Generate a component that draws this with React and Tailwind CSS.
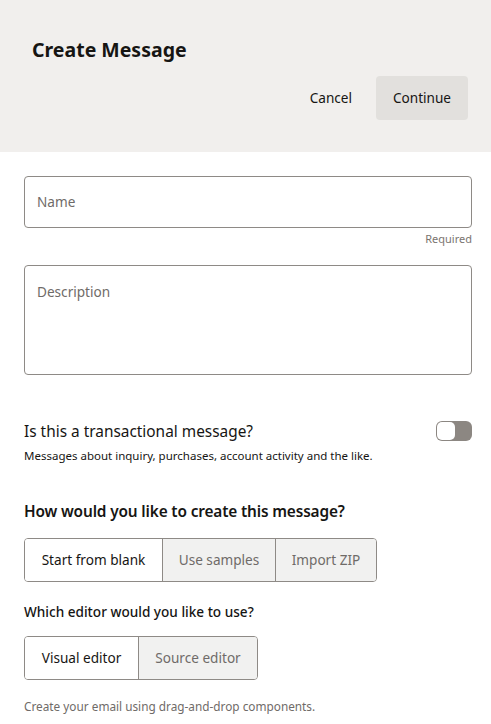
import React from "react";

const font = { fontFamily: '"Noto Sans", "Open Sans", sans-serif' };

const Segmented = ({ items, className = "" }) => (
  <div className={`flex border border-[#8e8a86] rounded-[4px] overflow-hidden w-fit ${className}`}>
    {items.map((it, i) => (
      <div
        key={it.label}
        className={`h-[42px] flex items-center justify-center text-[13.6px] ${it.w} ${
          i > 0 ? "border-l border-[#8e8a86]" : ""
        } ${it.active ? "bg-white text-[#161513]" : "bg-[#f1f1f0] text-[#6f6b68]"}`}
      >
        {it.label}
      </div>
    ))}
  </div>
);

export default function App() {
  return (
    <div className="w-[491px] min-h-[724px] bg-white" style={font}>
      {/* header */}
      <div className="bg-[#f1efed] h-[152px] px-[32px] pt-[36px]">
        <h1 className="text-[19.5px] font-bold text-[#161513] leading-[28px]">Create Message</h1>
        <div className="flex justify-end items-center gap-[12px] mt-[12px] -mr-[9px]">
          <button className="h-[44px] px-[12px] text-[13.6px] text-[#161513] pt-[1px]">Cancel</button>
          <button className="h-[44px] w-[92px] rounded-[4px] bg-[#e2e0dd] text-[13.6px] text-[#161513] pt-[1px]">
            Continue
          </button>
        </div>
      </div>

      {/* body */}
      <div className="pl-[24px] pr-[19px] pt-[24px] pb-[10px]">
        <div className="h-[52px] border border-[#8e8a86] rounded-[4px] flex items-center px-[12px] text-[13.6px] text-[#6f6b68]">
          Name
        </div>
        <div className="text-right text-[11px] text-[#7a746f] mt-[3px] leading-[16px]">Required</div>

        <div className="h-[110px] border border-[#8e8a86] rounded-[4px] px-[12px] pt-[16px] text-[13.6px] text-[#6f6b68] mt-[18px]">
          Description
        </div>

        <div className="flex justify-between items-center mt-[44px]">
          <div className="text-[15.4px] text-[#161513] leading-[22px] pt-[2px]">Is this a transactional message?</div>
          <div className="w-[36px] h-[20px] rounded-[6px] bg-[#8c8782] p-[1px]">
            <div className="w-[18px] h-[18px] rounded-[5px] bg-white" />
          </div>
        </div>
        <div className="text-[11.5px] text-[#161513] mt-[5px] leading-[16px]">
          Messages about inquiry, purchases, account activity and the like.
        </div>

        <div className="text-[15.4px] font-semibold text-[#161513] mt-[37px] leading-[22px] tracking-[-0.15px]">
          How would you like to create this message?
        </div>
        <Segmented
          className="mt-[15px]"
          items={[
            { label: "Start from blank", w: "w-[137px]", active: true },
            { label: "Use samples", w: "w-[113px]" },
            { label: "Import ZIP", w: "w-[101px]" },
          ]}
        />

        <div className="text-[13.6px] font-medium text-[#161513] mt-[20px] leading-[20px]">
          Which editor would you like to use?
        </div>
        <Segmented
          className="mt-[14px]"
          items={[
            { label: "Visual editor", w: "w-[113px]", active: true },
            { label: "Source editor", w: "w-[119px]" },
          ]}
        />
        <div className="text-[11.8px] text-[#6f6b68] mt-[18px] leading-[16px]">
          Create your email using drag-and-drop components.
        </div>
      </div>
    </div>
  );
}
